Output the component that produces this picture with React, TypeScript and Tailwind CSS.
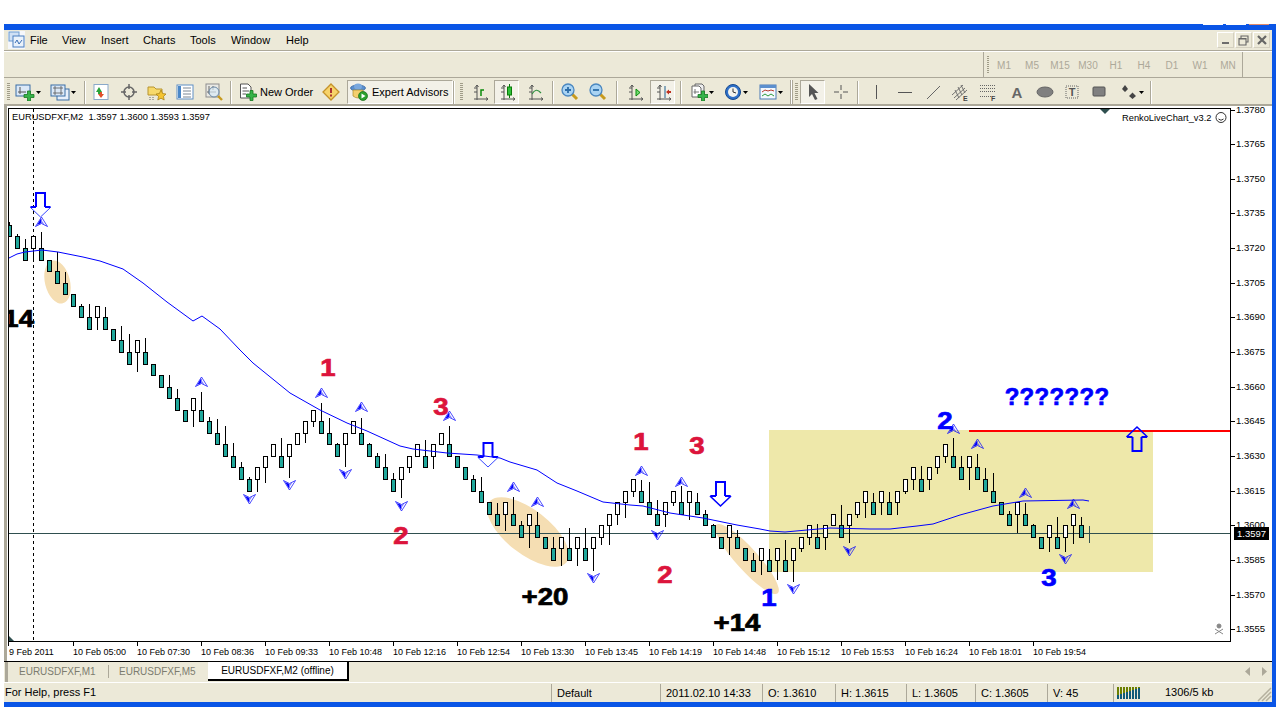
const D: number[][] = [
[-2,0,222],[-1,0,234],[0,0,239],[-1,1,260],[0,0,232],[1,0,0],[2,0,252],[3,0,272],[4,0,0],[5,0,304],[6,0,304],[5,1,330],[6,0,307],[7,0,0],[8,0,326],[9,0,334],[8,1,372],[9,0,338],[10,0,0],[11,0,0],[12,0,375],[13,0,389],[14,0,0],[13,1,427],[14,0,392],[15,0,417],[16,0,419],[17,0,426],[18,0,443],[19,0,462],[20,0,477],[19,1,492],[18,1,483],[17,1,0],[18,0,438],[17,1,478],[16,1,0],[15,1,443],[14,1,427],[15,0,403],[16,0,418],[17,0,443],[16,1,467],[15,1,0],[16,0,418],[17,0,443],[18,0,453],[19,0,454],[20,0,473],[19,1,498],[18,1,473],[17,1,0],[18,0,440],[17,1,469],[16,1,0],[17,0,426],[18,0,0],[19,0,0],[20,0,475],[21,0,477],[22,0,0],[23,0,503],[22,1,531],[23,0,497],[24,0,521],[23,1,548],[24,0,512],[25,0,0],[26,0,537],[25,1,566],[26,0,528],[25,1,566],[26,0,528],[25,1,571],[24,1,545],[23,1,545],[22,1,525],[21,1,518],[20,1,497],[21,0,480],[22,0,482],[23,0,500],[22,1,527],[21,1,506],[22,0,486],[21,1,520],[22,0,493],[23,0,510],[24,0,524],[25,0,0],[24,1,555],[25,0,530],[26,0,0],[27,0,553],[26,1,575],[27,0,549],[26,1,580],[27,0,540],[26,1,582],[25,1,552],[24,1,545],[25,0,524],[24,1,550],[23,1,0],[24,0,505],[23,1,543],[22,1,518],[21,1,518],[22,0,493],[21,1,515],[22,0,492],[21,1,515],[20,1,494],[19,1,490],[20,0,466],[19,1,490],[18,1,474],[17,1,463],[18,0,438],[19,0,456],[18,1,490],[19,0,454],[20,0,468],[21,0,473],[22,0,0],[23,0,511],[22,1,533],[23,0,503],[24,0,524],[25,0,0],[24,1,552],[25,0,517],[24,1,552],[23,1,544],[24,0,517],
];
const MA = "9,258 17,254 25,252 42,250 58,252 83,257 100,261 123,269 143,283 167,302 193,321 202,316 220,329 240,350 253,363 290,393 320,410 347,423 367,431 400,446 413,449 447,453 477,455 500,458 510,462 537,470 557,483 577,491 603,502 630,505 643,506 670,513 703,518 737,525 760,529 770,531 785,532 807,530 830,528 870,529 890,529 917,526 933,524 960,515 993,506 1023,501 1083,500 1089,501";
const UPS = [[41,222],[201,382],[321,393],[361,407],[449,416],[513,487],[537,502],[641,471],[681,482],[953,429],[977,444],[1025,493],[1073,504]];
const DOWNS = [[249,499],[289,485],[345,474],[401,506],[593,578],[657,535],[793,589],[849,551],[1065,559]];
const PRICES = ["1.3780","1.3765","1.3750","1.3735","1.3720","1.3705","1.3690","1.3675","1.3660","1.3645","1.3630","1.3615","1.3600","1.3585","1.3570","1.3555"];
const TIMES = ["10 Feb 05:00","10 Feb 07:30","10 Feb 08:36","10 Feb 09:33","10 Feb 10:48","10 Feb 12:16","10 Feb 12:54","10 Feb 13:30","10 Feb 13:45","10 Feb 14:19","10 Feb 14:48","10 Feb 15:12","10 Feb 15:53","10 Feb 16:24","10 Feb 18:01","10 Feb 19:54"];
const TF = ["M1","M5","M15","M30","H1","H4","D1","W1","MN"];
const MENU: [string, string][] = [["File","w-[32px]"],["View","w-[39px]"],["Insert","w-[42px]"],["Charts","w-[47px]"],["Tools","w-[41px]"],["Window","w-[55px]"],["Help","w-[40px]"]];

function Marker({ x, y, up }: { x: number; y: number; up: boolean }) {
  return (
    <g transform={`translate(${x} ${y}) scale(1 ${up ? 1 : -1})`}>
      <path d="M0.5,-5 L-5.5,4.5 L0.5,1.5 L6.5,4.5 Z" fill="none" stroke="#0000ff" strokeWidth="0.7" />
      <path d="M0,-3.5 L-4,3 L0.5,1 L0.5,-3 Z" fill="#0000ff" />
      <path d="M1,-1 L3.5,2.5 L1,1.2 Z" fill="#0000ff" fillOpacity="0.5" />
    </g>
  );
}
function BigArrow({ x, top, up, strong }: { x: number; top: number; up?: boolean; strong?: boolean }) {
  const s = up ? -1 : 1;
  return (
    <g transform={`translate(${x} ${top}) scale(1 ${s})`} fill="none" stroke="#0000ff">
      <path d="M-4.5,15 V1 H4.5 V15 M-10,15 H-4.5 M4.5,15 H10" strokeWidth="2" strokeLinejoin="miter" />
      <path d="M-10.5,15 L0,25 L10.5,15" strokeWidth={strong ? 1.6 : 1} stroke={strong ? "#0000ff" : "#3848ff"} />
    </g>
  );
}
function Big({ x, y, fill, anchor = "middle", children }: { x: number; y: number; fill: string; anchor?: "middle" | "end"; children: string }) {
  return (
    <text
      transform={`translate(${x} ${y}) scale(1.2 1)`}
      textAnchor={anchor}
      fill={fill}
      stroke={fill}
      strokeWidth="0.7"
      fontFamily="'Liberation Sans',sans-serif"
      fontWeight="700"
      fontSize="23"
    >
      {children}
    </text>
  );
}
function Chart() {
  return (
    <svg viewBox="9 109 1221 532" width="1221" height="532" className="block bg-white">
      <ellipse cx="57.5" cy="282" rx="12.5" ry="22" transform="rotate(-14 57.5 282)" fill="#f5deb3" />
      <rect x="769" y="430" width="384" height="142" fill="#eee8aa" />
      <ellipse cx="528" cy="532" rx="49" ry="22" transform="rotate(38 528 532)" fill="#f5deb3" />
      <ellipse cx="747" cy="559" rx="46" ry="11" transform="rotate(48 747 559)" fill="#f5deb3" />
      <line x1="9" x2="1230" y1="533.5" y2="533.5" stroke="#2f4f4f" />
      <line x1="33.5" x2="33.5" y1="109" y2="641" stroke="#000" strokeDasharray="3 3" />
      <path d="M9,636 L14,641 H9 Z" fill="#2f4f4f" />
      <path d="M1100,109 H1110 L1105,114 Z" fill="#2f4f4f" />
      <g shapeRendering="crispEdges">
        {D.map(([k, w, wick], i) => {
          const c = 8 * i + 9.5;
          const t = Math.round(248 + 11.55 * k);
          const b = Math.round(248 + 11.55 * (k + 1));
          return (
            <g key={i}>
              {wick > 0 && <line x1={c} x2={c} y1={wick} y2={w ? b : t} stroke="#000" />}
              <rect x={c - 2} y={t + 0.5} width="4" height={b - t} fill={w ? "#fff" : "#20a89c"} stroke="#000" />
            </g>
          );
        })}
        <line x1="1089.5" x2="1089.5" y1="526" y2="543" stroke="#2f4f4f" />
      </g>
      <polyline points={MA} fill="none" stroke="#0000ff" strokeWidth="1" />
      <line x1="969" x2="1230" y1="431" y2="431" stroke="#ff0000" strokeWidth="2" />
      {UPS.map(([x, y], i) => <Marker key={i} x={x} y={y} up />)}
      {DOWNS.map(([x, y], i) => <Marker key={i} x={x} y={y} up={false} />)}
      <BigArrow x={40.5} top={192} />
      <BigArrow x={488} top={442} />
      <BigArrow x={720.5} top={481} strong />
      <BigArrow x={1137} top={452} up strong />
      <Big x={328} y={376} fill="#dc143c">1</Big>
      <Big x={441} y={415} fill="#dc143c">3</Big>
      <Big x={401} y={544} fill="#dc143c">2</Big>
      <Big x={641} y={450} fill="#dc143c">1</Big>
      <Big x={697} y={454} fill="#dc143c">3</Big>
      <Big x={665} y={583} fill="#dc143c">2</Big>
      <Big x={769} y={606} fill="#0000ff">1</Big>
      <Big x={945} y={429} fill="#0000ff">2</Big>
      <Big x={1049} y={586} fill="#0000ff">3</Big>
      <text x="1057" y="405" textAnchor="middle" fill="#0000ff" stroke="#0000ff" strokeWidth="0.7" fontFamily="'Liberation Sans',sans-serif" fontWeight="700" fontSize="24" letterSpacing="0.3">???????</text>
      <Big x={545} y={605} fill="#000">+20</Big>
      <Big x={737} y={631} fill="#000">+14</Big>
      <Big x={34} y={327} fill="#000" anchor="end">14</Big>
      <g fontFamily="'Liberation Sans',sans-serif" fontSize="9.3" fill="#000">
        <text x="12" y="120" xmlSpace="preserve">EURUSDFXF,M2  1.3597 1.3600 1.3593 1.3597</text>
        <text x="1122" y="121">RenkoLiveChart_v3.2</text>
      </g>
      <g fill="none" stroke="#000" strokeWidth="0.8">
        <circle cx="1221" cy="117.5" r="5" />
        <path d="M1218.5,119 Q1221,121.5 1223.5,119" />
      </g>
      <g fill="#888" stroke="#888">
        <circle cx="1219" cy="626" r="2" />
        <path d="M1215,629 L1223,634 M1223,629 L1215,634" fill="none" />
      </g>
    </svg>
  );
}

const Grip = ({ cls = "" }: { cls?: string }) => (
  <div className={`w-[3px] h-[18px] bg-[repeating-linear-gradient(to_bottom,#a09c88_0,#a09c88_1px,#ece9d8_1px,#ece9d8_2px)] ${cls}`} />
);
const Sep = ({ cls = "" }: { cls?: string }) => (
  <div className={`w-[2px] h-[23px] border-l border-l-[#aca899] border-r border-r-white ${cls}`} />
);
const Caret = () => (
  <div className="w-[7px] flex justify-center">
    <svg width="5" height="3"><path d="M0,0 H5 L2.5,3 Z" fill="#000" /></svg>
  </div>
);
function Ico({ w = 18, cls = "", children }: { w?: number; cls?: string; children: React.ReactNode }) {
  return <svg viewBox={`0 0 ${w} 18`} width={w} height={18} className={`shrink-0 ${cls}`}>{children}</svg>;
}
const Plus = ({ x = 8, y = 7 }: { x?: number; y?: number }) => (
  <path transform={`translate(${x} ${y})`} d="M3.5,0 H6.5 V3.5 H10 V6.5 H6.5 V10 H3.5 V6.5 H0 V3.5 H3.5 Z" fill="#37b34a" stroke="#17791f" strokeWidth="0.8" />
);
const Axes = () => (
  <path d="M3,16 H17 M6,2 V17 M4.5,4 L6,2 L7.5,4 M15,14.5 L17,16 L15,17.5 M3,5 H6 M3,9 H6" fill="none" stroke="#555" strokeWidth="1" />
);
const Glass = ({ minus }: { minus?: boolean }) => (
  <>
    <path d="M11,11 L16,16" stroke="#c79a1e" strokeWidth="3" />
    <circle cx="7" cy="7" r="6" fill="#a9d3f3" stroke="#4a87c0" strokeWidth="1.3" />
    <path d={minus ? "M4,7 H10" : "M4,7 H10 M7,4 V10"} stroke="#2c6da8" strokeWidth="1.8" />
  </>
);
const Pressed = ({ cls, children }: { cls: string; children: React.ReactNode }) => (
  <div className={`h-[24px] flex items-center justify-center border border-t-[#aca899] border-l-[#aca899] border-r-white border-b-white bg-[#f3f1e8] ${cls}`}>{children}</div>
);

function Toolbar() {
  return (
    <div className="flex items-center h-[26px] shrink-0 pt-[2px] text-[11px] text-black">
      <Grip cls="ml-[3px]" />
      <Ico w={20} cls="ml-[5px]">
        <rect x="1" y="2" width="14" height="11" fill="#dbe8f7" stroke="#3a6ea5" />
        <path d="M3,9 H11 M5,4 V11" stroke="#555" fill="none" />
        <Plus x={9} y={8} />
      </Ico>
      <Caret />
      <Ico w={20} cls="ml-[8px]">
        <rect x="7" y="6" width="12" height="11" fill="#e8f0fb" stroke="#3a6ea5" />
        <rect x="1" y="2" width="14" height="11" fill="#dbe8f7" stroke="#3a6ea5" />
        <path d="M3,5 H13 M3,10 H13 M5,3 V12 M11,3 V12" stroke="#555" strokeWidth="0.8" fill="none" />
      </Ico>
      <Caret />
      <Sep cls="ml-[7px]" />
      <Ico cls="ml-[6px]">
        <rect x="2" y="1.5" width="14" height="15" fill="#fff" stroke="#8aa9c9" />
        <path d="M4,9 L7,4 L10,9 H8 V11 H6 V9 Z" fill="#2aa43a" />
        <path d="M8,9 H10 V11 H12 L9,15 L6,11 H8 Z" fill="#e0502a" />
      </Ico>
      <Ico cls="ml-[10px]">
        <circle cx="9" cy="9" r="5" fill="none" stroke="#666" strokeWidth="1.5" />
        <path d="M9,1 V6 M9,12 V17 M1,9 H6 M12,9 H17" stroke="#666" strokeWidth="1.5" />
      </Ico>
      <Ico w={20} cls="ml-[9px]">
        <path d="M1,4 H7 L9,6 H15 V12 H1 Z" fill="#f7d96a" stroke="#b79431" />
        <path d="M14,7 L15.6,10.5 L19,11 L16.5,13.4 L17.2,17 L14,15.2 L10.8,17 L11.5,13.4 L9,11 L12.4,10.5 Z" fill="#f4c430" stroke="#a07a10" strokeWidth="0.7" />
        <path d="M3,14 V17 M6,14 V17" stroke="#666" strokeDasharray="1 1" />
      </Ico>
      <Ico cls="ml-[9px]">
        <rect x="1" y="2" width="16" height="14" fill="#fff" stroke="#5f8fc4" />
        <rect x="2" y="3" width="3" height="12" fill="#4a87c8" />
        <path d="M7,5 H15 M7,8 H15 M7,11 H15 M7,14 H15" stroke="#7b8794" />
      </Ico>
      <Ico w={20} cls="ml-[10px]">
        <rect x="2" y="1" width="13" height="13" fill="#e9e9e4" stroke="#8d8d8d" />
        <path d="M5,3 V11 M3,9 H12 M9,3 V7" stroke="#666" />
        <circle cx="10" cy="9" r="5" fill="#d9e9f5" fillOpacity="0.7" stroke="#6c8aa6" />
        <path d="M14,13 L18,17" stroke="#c79a1e" strokeWidth="2.4" />
      </Ico>
      <Sep cls="ml-[6px]" />
      <Ico cls="ml-[7px]">
        <path d="M1.5,1 H9 L12,4 V15 H1.5 Z" fill="#fff" stroke="#555" />
        <path d="M3.5,5 H8 M3.5,8 H10 M3.5,11 H7" stroke="#555" />
        <Plus x={7.5} y={7.5} />
      </Ico>
      <span className="ml-[3px] w-[52px] whitespace-nowrap">New Order</span>
      <Ico cls="ml-[10px]">
        <path d="M9,1 L17,9 L9,17 L1,9 Z" fill="#f7d36a" stroke="#c5922a" strokeWidth="1.3" />
        <path d="M9,5 V10" stroke="#a33" strokeWidth="2" />
        <rect x="8" y="11.5" width="2" height="2" fill="#a33" />
      </Ico>
      <Pressed cls="ml-[7px] w-[106px] !justify-start">
        <Ico cls="ml-[2px]">
          <ellipse cx="8" cy="5" rx="7.5" ry="3" fill="#5a8fd0" stroke="#2a5a9a" strokeWidth="0.7" />
          <ellipse cx="8" cy="3.5" rx="4" ry="3" fill="#7aa8de" />
          <path d="M3,7 H13 V13 Q8,17 3,13 Z" fill="#f3cf6e" stroke="#a98a2a" strokeWidth="0.7" />
          <circle cx="13" cy="13" r="4.5" fill="#2ca02c" stroke="#176b17" strokeWidth="0.7" />
          <path d="M11.5,10.5 L15.5,13 L11.5,15.5 Z" fill="#fff" />
        </Ico>
        <span className="ml-[4px] whitespace-nowrap">Expert Advisors</span>
      </Pressed>
      <Sep cls="" />
      <Grip cls="ml-[5px]" />
      <Ico cls="ml-[8px]"><Axes /><path d="M10,13 V7 H13" stroke="#0a8a0a" strokeWidth="1.5" fill="none" /></Ico>
      <Pressed cls="ml-[5px] w-[25px]">
        <Ico><Axes /><path d="M11.5,1 V15" stroke="#0a7a0a" /><rect x="9.5" y="4" width="4" height="8" fill="#2fc03a" stroke="#0a7a0a" /></Ico>
      </Pressed>
      <Ico cls="ml-[7px]"><Axes /><path d="M6,11 Q10,4 15,10" stroke="#2f8f3f" strokeWidth="1.2" fill="none" /></Ico>
      <Sep cls="ml-[8px]" />
      <Ico cls="ml-[7px]"><Glass /></Ico>
      <Ico cls="ml-[10px]"><Glass minus /></Ico>
      <Sep cls="ml-[9px]" />
      <Ico cls="ml-[8px]"><Axes /><path d="M10,6 L14,9.5 L10,13 Z" fill="#6fdc6f" stroke="#0a8a0a" /></Ico>
      <Pressed cls="ml-[6px] w-[25px]">
        <Ico><Axes /><path d="M11,3 V15" stroke="#1f5f8f" /><path d="M12,9 L15,6.5 V8 H17 V10 H15 V11.5 Z" fill="#c0301f" /></Ico>
      </Pressed>
      <Sep cls="ml-[5px]" />
      <Ico cls="ml-[8px]">
        <path d="M5,1 H12 L14,3 V13 H5 Z" fill="#eee" stroke="#666" />
        <path d="M2,3 H9 L11,5 V14 H2 Z" fill="#fff" stroke="#666" />
        <path d="M5,6 V11 M3.5,9 H9" stroke="#777" />
        <Plus x={8} y={8} />
      </Ico>
      <Caret />
      <Ico cls="ml-[9px]">
        <circle cx="9" cy="9" r="7.5" fill="#2e70c8" stroke="#174a90" />
        <circle cx="9" cy="9" r="5" fill="#f4f4ee" />
        <path d="M9,5.5 V9 L12,10" stroke="#333" strokeWidth="1" fill="none" />
      </Ico>
      <Caret />
      <Ico cls="ml-[10px]">
        <rect x="1" y="2" width="16" height="14" fill="#f4f8fd" stroke="#4a7bb5" />
        <rect x="1" y="2" width="16" height="3" fill="#5c8fce" />
        <path d="M3,9 L6,7 L9,8 L12,7 L15,8" stroke="#b5352a" fill="none" />
        <path d="M3,13 L6,11 L9,13 L12,11 L15,13" stroke="#2c9a3c" fill="none" />
      </Ico>
      <Caret />
      <div className="ml-[6px] w-[3px] h-[24px] border-x border-[#aca899] bg-white" />
      <Grip cls="ml-[2px]" />
      <Pressed cls="ml-[2px] w-[25px]">
        <Ico><path d="M5,1 V14 L8,11 L11,17 L13.5,16 L10.5,10 L14.5,10 Z" fill="#555" /></Ico>
      </Pressed>
      <Ico cls="ml-[7px]"><path d="M9,2 V7 M9,11 V16 M2,9 H7 M11,9 H16" stroke="#555" /></Ico>
      <Sep cls="ml-[7px]" />
      <Ico cls="ml-[8px]"><path d="M9.5,2 V16" stroke="#555" /></Ico>
      <Ico cls="ml-[11px]"><path d="M2,9.5 H16" stroke="#555" /></Ico>
      <Ico cls="ml-[10px]"><path d="M3,16 L16,3" stroke="#666" /></Ico>
      <Ico cls="ml-[9px]">
        <path d="M1,12 L12,2 M3,15 L14,5 M5,17 L16,7 M4,7 L8,15 M7,4 L11,12 M10,2 L14,10" stroke="#666" strokeWidth="0.9" />
        <text x="12" y="17.5" fontSize="7" fontWeight="700" fill="#444" fontFamily="'Liberation Sans',sans-serif">E</text>
      </Ico>
      <Ico cls="ml-[10px]">
        <path d="M1,2.5 H16 M1,5.5 H16 M1,8.5 H16 M1,13.5 H12" stroke="#666" strokeDasharray="1 1" />
        <text x="12" y="17.5" fontSize="7" fontWeight="700" fill="#444" fontFamily="'Liberation Sans',sans-serif">F</text>
      </Ico>
      <span className="ml-[11px] w-[18px] text-center text-[15px] leading-none font-bold text-[#666]">A</span>
      <Ico cls="ml-[10px]"><ellipse cx="9" cy="9" rx="8" ry="5" fill="#808080" stroke="#666" /></Ico>
      <Ico cls="ml-[9px]">
        <rect x="3" y="3" width="12" height="12" fill="none" stroke="#666" strokeDasharray="1 1" />
        <text x="9" y="13" textAnchor="middle" fontSize="11" fontWeight="700" fill="#555" fontFamily="'Liberation Sans',sans-serif">T</text>
      </Ico>
      <Ico cls="ml-[9px]"><rect x="3" y="4" width="12" height="9" rx="1" fill="#808080" stroke="#555" /></Ico>
      <Ico cls="ml-[12px]"><path d="M2,6 L5,2 L8,6 L5,9 Z M9,13 L12.5,9.5 L16,13 L12.5,16 Z" fill="#444" /></Ico>
      <Caret />
      <Sep cls="ml-[5px]" />
    </div>
  );
}

function WinBtn({ children }: { children: React.ReactNode }) {
  return <div className="w-[17px] h-[16px] mr-px flex items-center justify-center border-r border-b border-r-[#d4d0c0] border-b-[#d4d0c0] border-t border-l border-t-white border-l-white">{children}</div>;
}

function App() {
  return (
    <div className="relative w-[1276px] h-[707px] overflow-hidden bg-white pt-[24px] pl-[4px] text-[11px] text-black [font-family:'Liberation_Sans',sans-serif]">
      <div className="flex items-start gap-[3px] absolute top-[24px] left-[1203px]">
        <div className="w-[20px] h-[1px] bg-white" />
        <div className="w-[20px] h-[1px] bg-white" />
        <div className="w-[20px] h-[1px] bg-[#e08a6a]" />
      </div>
      <div className="w-[1272px] h-[683px] border-t-[6px] border-r-[4px] border-b-[5px] border-[#0a55e6] bg-[#ece9d8] flex flex-col">
        {/* menu */}
        <div className="flex items-center h-[20px] shrink-0 pl-[4px]">
          <svg width="17" height="18" viewBox="0 0 17 18" className="shrink-0">
            <rect width="17" height="18" fill="#f5f7fb" />
            <rect x="1" y="1" width="10" height="9" fill="#cfe0f5" stroke="#6d9bd0" />
            <rect x="5" y="5" width="11" height="11" fill="#eaf2fb" stroke="#4a7fc0" />
            <path d="M7,12 L9,9 L11,13 L14,9" stroke="#3a6fb5" fill="none" />
          </svg>
          <div className="flex ml-[5px]">
            {MENU.map(([m, w]) => <span key={m} className={w}>{m}</span>)}
          </div>
          <div className="ml-auto flex items-center pr-px">
            <WinBtn><div className="w-[7px] h-[2px] bg-[#6d6d6d] mt-[5px]" /></WinBtn>
            <WinBtn>
              <svg width="11" height="11" viewBox="0 0 11 11"><path d="M3,3 V1 H10 V7 H8 M1,3.5 H8 V10 H1 Z M1,4 H8" fill="none" stroke="#666" strokeWidth="1.1" /></svg>
            </WinBtn>
            <WinBtn>
              <svg width="10" height="10" viewBox="0 0 10 10"><path d="M1,1 L9,9 M9,1 L1,9" stroke="#666" strokeWidth="2.2" /></svg>
            </WinBtn>
          </div>
        </div>
        <div className="h-px bg-[#aca899] shrink-0" />
        <div className="h-px bg-white shrink-0" />
        {/* timeframes row */}
        <div className="flex justify-end h-[25px] shrink-0 pr-[29px]">
          <div className="w-[260px] h-[25px] pt-px flex items-center border-l border-l-[#aca899] border-r border-r-[#aca899] text-[10px] text-[#aca899]">
            <Grip cls="ml-[3px]" />
            <div className="flex ml-[1px]">
              {TF.map((t) => <span key={t} className="w-[28px] text-center">{t}</span>)}
            </div>
          </div>
        </div>
        <div className="h-px bg-[#aca899] shrink-0" />
        <Toolbar />
        <div className="h-[2px] bg-[#aca899] shrink-0" />
        {/* chart area */}
        <div className="flex h-[555px] shrink-0 bg-white">
          <div className="w-[3px] bg-[#aca899] shrink-0" />
          <div className="w-px bg-white shrink-0" />
          <div className="flex-1 flex flex-col">
            <div className="h-[2px]" />
            <div className="flex h-[534px]">
              <div className="w-[1223px] h-[534px] border border-black shrink-0 overflow-hidden">
                <Chart />
              </div>
              <div className="relative flex-1 pt-[1.5px] text-[9.5px] leading-[14px]">
                {PRICES.map((p) => (
                  <div key={p} className="h-[34.66px] flex items-start">
                    <div className="w-[4px] h-px bg-black" />
                    <span className="ml-[1px] -mt-[7px]">{p}</span>
                  </div>
                ))}
                <div className="absolute left-[3px] top-[419px] w-[35px] h-[13px] bg-black text-white text-center leading-[13px]">1.3597</div>
              </div>
            </div>
            <div className="flex h-[19px] text-[9px] leading-[12px]">
              <div className="w-[65px] flex">
                <div className="w-px h-[4px] bg-black" />
                <span className="mt-[4px]">9 Feb 2011</span>
              </div>
              {TIMES.map((t) => (
                <div key={t} className="w-[64px] flex shrink-0">
                  <div className="w-px h-[4px] bg-black" />
                  <span className="-ml-[1px] mt-[4px] whitespace-nowrap">{t}</span>
                </div>
              ))}
            </div>
          </div>
        </div>
        {/* tabs */}
        <div className="flex h-[21px] shrink-0 border-t border-t-black pl-[1px] text-[10px] text-[#7c7c6f]">
          <div className="w-[3px] h-full bg-[#aca899]" />
          <span className="ml-[11px] w-[89px] leading-[19px]">EURUSDFXF,M1</span>
          <div className="w-px h-[13px] mt-[3px] bg-[#aca899]" />
          <span className="ml-[10px] w-[89px] leading-[19px]">EURUSDFXF,M5</span>
          <div className="w-[141px] h-[19px] bg-white border-r-2 border-b-2 border-black text-black text-center leading-[18px]">EURUSDFXF,M2 (offline)</div>
          <div className="ml-auto flex items-center gap-[12px] pr-[5px] h-[19px]">
            <svg width="5" height="9"><path d="M5,0 V9 L0,4.5 Z" fill="#aca899" /></svg>
            <svg width="5" height="9"><path d="M0,0 V9 L5,4.5 Z" fill="#aca899" /></svg>
          </div>
        </div>
        <div className="h-px bg-white shrink-0" />
        {/* status */}
        <div className="relative flex flex-1 items-center text-[11px]">
          <div className="w-[547px] pl-[1px]">For Help, press F1</div>
          <div className="w-[109px] pl-[5px] border-l border-l-[#aca899] h-[18px] leading-[18px]">Default</div>
          <div className="w-[102px] pl-[5px] border-l border-l-[#aca899] h-[18px] leading-[18px]">2011.02.10 14:33</div>
          <div className="w-[73px] pl-[5px] border-l border-l-[#aca899] h-[18px] leading-[18px]">O: 1.3610</div>
          <div className="w-[71px] pl-[5px] border-l border-l-[#aca899] h-[18px] leading-[18px]">H: 1.3615</div>
          <div className="w-[69px] pl-[5px] border-l border-l-[#aca899] h-[18px] leading-[18px]">L: 1.3605</div>
          <div className="w-[72px] pl-[5px] border-l border-l-[#aca899] h-[18px] leading-[18px]">C: 1.3605</div>
          <div className="w-[66px] pl-[5px] border-l border-l-[#aca899] h-[18px] leading-[18px]">V: 45</div>
          <div className="pl-[3px] border-l border-l-[#aca899] h-[18px] flex items-center">
            <svg width="23" height="12" viewBox="0 0 23 12">
              {[0, 3, 6, 9, 12, 15, 18, 21].map((x, i) => (
                <g key={x}>
                  <rect x={x} y="0" width="2" height={8 - i} fill="#6b7f00" />
                  <rect x={x} y={8 - i} width="2" height={4 + i} fill="#0f5a78" />
                </g>
              ))}
            </svg>
          </div>
          <span className="ml-[25px]">1306/5 kb</span>
          <svg width="15" height="15" viewBox="0 0 15 15" className="absolute right-0 bottom-0">
            <path d="M14,1 L1,14 M14,5 L5,14 M14,9 L9,14" stroke="#b5b09e" strokeWidth="1.5" />
          </svg>
        </div>
      </div>
    </div>
  );
}
export default App;
